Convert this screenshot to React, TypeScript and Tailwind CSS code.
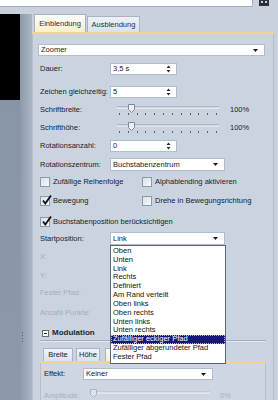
import React from "react";

const items = [
  "Oben",
  "Unten",
  "Link",
  "Rechts",
  "Definiert",
  "Am Rand verteilt",
  "Oben links",
  "Oben rechts",
  "Unten links",
  "Unten rechts",
  "Zufälliger eckiger Pfad",
  "Zufälliger abgerundeter Pfad",
  "Fester Pfad",
];

function Arrow() {
  return (
    <svg width="5" height="3" viewBox="0 0 5 3" className="shrink-0">
      <path d="M0 0H5L2.5 3Z" fill="#1a1a1a" />
    </svg>
  );
}

function SpinArrows() {
  return (
    <svg width="5" height="8" viewBox="0 0 5 8" className="shrink-0">
      <path d="M0.5 3L2.5 0.5L4.5 3Z M0.5 5H4.5L2.5 7.5Z" fill="#2a2a2a" />
    </svg>
  );
}

function Spin({ value }: { value: string }) {
  return (
    <div className="w-[67px] h-[12px] bg-white border border-[#b1bdcc] flex items-center justify-between pl-[2px] pr-[5px]">
      <span>{value}</span>
      <SpinArrows />
    </div>
  );
}

function SliderSvg({ w, thumb, dim }: { w: number; thumb: number; dim?: boolean }) {
  const ticks = Array.from({ length: 12 }, (_, i) => 2 + i * ((w - 5) / 11));
  return (
    <svg width={w} height={12} viewBox={`0 0 ${w} 12`} className="shrink-0">
      <rect x="0" y="2.5" width={w} height="1" fill={dim ? "#b3bdca" : "#8e9bad"} />
      <rect x="0" y="3.5" width={w} height="1" fill="#f4f7fa" />
      <path
        d={`M${thumb + 0.5} 0.5h6v5l-3 3l-3-3z`}
        fill={dim ? "#dde3ea" : "#eef1f5"}
        stroke={dim ? "#a9b3c1" : "#7d899b"}
        strokeWidth="1"
      />
      {!dim &&
        ticks.map((x, i) => (
          <rect key={i} x={Math.round(x)} y="9" width="1" height="2" fill="#56627a" />
        ))}
    </svg>
  );
}

function Check({ checked, label }: { checked?: boolean; label: string }) {
  return (
    <div className="flex items-center h-[10px]">
      <div className="relative w-[10px] h-[10px] border border-[#8d9aae] bg-gradient-to-br from-[#d9e0e9] to-[#f7f9fb] shrink-0">
        {checked && (
          <svg width="12" height="12" viewBox="0 0 12 12" className="absolute left-[0px] top-[-3px]">
            <path d="M2 6.5L4.3 9.5L10 1.5" stroke="#111" strokeWidth="1.9" fill="none" />
          </svg>
        )}
      </div>
      <span className="ml-[3px] whitespace-nowrap">{label}</span>
    </div>
  );
}

export default function App() {
  return (
    <div className="w-[278px] h-[400px] overflow-hidden bg-[#c8d2df] flex flex-col font-['Liberation_Sans',Arial,sans-serif] text-[7.5px] leading-none text-[#17202e]">
      {/* top bar */}
      <div className="h-[14px] flex items-start shrink-0">
        <div className="w-[253px] h-[7px] bg-white border-b border-r border-[#a3b0c1]" />
        <svg width="10" height="6" viewBox="0 0 10 6" className="ml-[6px]">
          <rect x="0" y="0" width="10" height="6" fill="#2b2f36" />
          <rect x="2" y="1" width="2" height="2" fill="#c9d0d9" />
          <rect x="6" y="1" width="2" height="2" fill="#c9d0d9" />
        </svg>
      </div>

      <div className="flex flex-1 min-h-0">
        {/* left strip */}
        <div className="w-[20px] flex flex-col bg-gradient-to-b from-[#8794a6] to-[#8d99ab]">
          <div className="h-[86px] bg-black" />
        </div>
        <div className="w-[12px] flex flex-col items-start pl-[2px] bg-gradient-to-r from-[#8e9aab] to-[#aab5c4]">
          <div className="mt-[318px] flex flex-col gap-[2px]">
            <div className="w-[1px] h-[1px] bg-[#4f5a6a]" />
            <div className="w-[1px] h-[1px] bg-[#4f5a6a]" />
            <div className="w-[1px] h-[1px] bg-[#4f5a6a]" />
            <div className="w-[1px] h-[1px] bg-[#4f5a6a]" />
          </div>
        </div>

        {/* main panel */}
        <div className="w-[242px] flex flex-col">
          {/* tabs */}
          <div className="h-[18px] flex items-end pl-[2px] shrink-0">
            <div className="w-[52px] h-[18px] border border-b-0 border-[#a4b1c3] bg-gradient-to-b from-[#fbfcfd] to-[#fbefc8] flex items-center justify-center text-[#243040]">
              Einblendung
            </div>
            <div className="w-[53px] h-[16px] ml-[1px] border border-b-0 border-[#a7b4c5] bg-gradient-to-b from-[#eef2f7] to-[#d9e1ea] flex items-center justify-center text-[#243040]">
              Ausblendung
            </div>
          </div>
          <div className="h-[2px] bg-[#f0d68c] shrink-0" />
          {/* content */}
          <div className="flex-1 flex flex-col border-l border-r border-[#b4c0cf] pl-[5px] bg-[#cad4e1]">
            <div className="mt-[10px] w-[227px] h-[12px] bg-white border border-[#b1bdcc] flex items-center justify-between pl-[2px] pr-[6px]">
              <span>Zoomer</span>
              <Arrow />
            </div>

            <div className="mt-[7px] flex items-center h-[12px] pl-[2px]">
              <span className="w-[70px]">Dauer:</span>
              <Spin value="3,5 s" />
            </div>
            <div className="mt-[11px] flex items-center h-[12px] pl-[2px]">
              <span className="w-[70px] whitespace-nowrap">Zeichen gleichzeitig:</span>
              <Spin value="5" />
            </div>

            <div className="mt-[6px] flex items-center h-[12px] pl-[2px]">
              <span className="w-[77px]">Schriftbreite:</span>
              <SliderSvg w={102} thumb={11} />
              <span className="ml-[11px]">100%</span>
            </div>
            <div className="mt-[6px] flex items-center h-[12px] pl-[2px]">
              <span className="w-[77px]">Schrifthöhe:</span>
              <SliderSvg w={102} thumb={11} />
              <span className="ml-[11px]">100%</span>
            </div>

            <div className="mt-[6px] flex items-center h-[12px] pl-[2px]">
              <span className="w-[70px]">Rotationsanzahl:</span>
              <Spin value="0" />
            </div>
            <div className="mt-[6px] flex items-center h-[13px] pl-[2px]">
              <span className="w-[70px] whitespace-nowrap">Rotationszentrum:</span>
              <div className="w-[115px] h-[13px] bg-white border border-[#b1bdcc] flex items-center justify-between pl-[2px] pr-[6px]">
                <span>Buchstabenzentrum</span>
                <Arrow />
              </div>
            </div>

            <div className="mt-[6px] grid grid-cols-[102px_1fr] pl-[2px]">
              <Check label="Zufällige Reihenfolge" />
              <Check label="Alphablending aktivieren" />
            </div>
            <div className="mt-[9px] grid grid-cols-[102px_1fr] pl-[2px]">
              <Check checked label="Bewegung" />
              <Check label="Drehe in Bewegungsrichtung" />
            </div>
            <div className="mt-[11px] pl-[2px]">
              <Check checked label="Buchstabenposition berücksichtigen" />
            </div>

            <div className="mt-[5px] flex items-center h-[13px] pl-[2px]">
              <span className="w-[70px]">Startposition:</span>
              <div className="relative w-[115px] h-[13px] bg-white border border-[#b1bdcc] flex items-center justify-between pl-[2px] pr-[6px]">
                <span>Link</span>
                <Arrow />
                <div className="absolute left-[-1px] top-[12px] z-10 w-[116px] bg-white border border-[#5d6470] pt-[1px] pb-[1px]">
                  {items.map((it) => (
                    <div
                      key={it}
                      className={
                        it === "Zufälliger eckiger Pfad"
                          ? "h-[8.83px] leading-[8.83px] pl-[2px] bg-[#16187a] text-white whitespace-nowrap outline-1 outline-dotted outline-offset-[-1px] outline-[#c9c26a]"
                          : "h-[8.83px] leading-[8.83px] pl-[2px] text-[#111] whitespace-nowrap"
                      }
                    >
                      {it}
                    </div>
                  ))}
                </div>
              </div>
            </div>

            <div className="mt-[6px] h-[12px] flex items-center pl-[2px] text-[#a3aebd]">X:</div>
            <div className="mt-[7px] h-[12px] flex items-center pl-[2px] text-[#a3aebd]">Y:</div>
            <div className="mt-[5px] h-[12px] flex items-center pl-[2px] text-[#a3aebd]">Fester Pfad:</div>
            <div className="mt-[8px] h-[12px] flex items-center pl-[2px] text-[#a3aebd]">Anzahl Punkte:</div>

            {/* Modulation group */}
            <div className="ml-[2px] w-[226px] flex flex-col">
              <div className="mt-[9px] h-[10px] flex items-center pl-[2px]">
                <div className="w-[7px] h-[7px] border border-[#5f6b7c] bg-white flex items-center justify-center">
                  <div className="w-[3px] h-[1px] bg-[#222]" />
                </div>
                <span className="ml-[3px] text-[8px] font-bold text-[#1b2433]">Modulation</span>
              </div>
              <div className="mt-[2px] h-[1px] bg-[#9fadbf]" />
              <div className="h-[1px] bg-[#e3e9f0]" />

              <div className="mt-[6px] h-[13px] flex items-end pl-[3px]">
                <div className="w-[30px] h-[13px] border border-b-0 border-[#a7b4c5] bg-gradient-to-b from-[#f2f5f9] to-[#dbe2eb] flex items-center justify-center">
                  Breite
                </div>
                <div className="w-[24px] h-[13px] ml-[3px] border border-b-0 border-[#a7b4c5] bg-gradient-to-b from-[#f2f5f9] to-[#dbe2eb] flex items-center justify-center">
                  Höhe
                </div>
                <div className="w-[40px] h-[13px] ml-[5px] border border-b-0 border-[#a7b4c5] bg-gradient-to-b from-[#fbfcfd] to-[#fbefc8]" />
              </div>
              <div className="h-[2px] bg-[#f0d68c]" />
              <div className="border-l border-r border-[#b4c0cf] bg-[#cdd6e2] h-[40px] flex flex-col pl-[3px]">
                <div className="mt-[5px] flex items-center h-[12px]">
                  <span className="w-[39px]">Effekt:</span>
                  <div className="w-[130px] h-[12px] bg-white border border-[#b1bdcc] flex items-center justify-between pl-[2px] pr-[6px]">
                    <span>Keiner</span>
                    <Arrow />
                  </div>
                </div>
                <div className="mt-[9px] flex items-start h-[12px] text-[#a7b1bf]">
                  <span className="w-[46px] pt-[3px]">Amplitude:</span>
                  <SliderSvg w={120} thumb={0} dim />
                  <span className="ml-[10px] pt-[3px]">0%</span>
                </div>
              </div>
            </div>
          </div>
        </div>
      </div>
    </div>
  );
}
